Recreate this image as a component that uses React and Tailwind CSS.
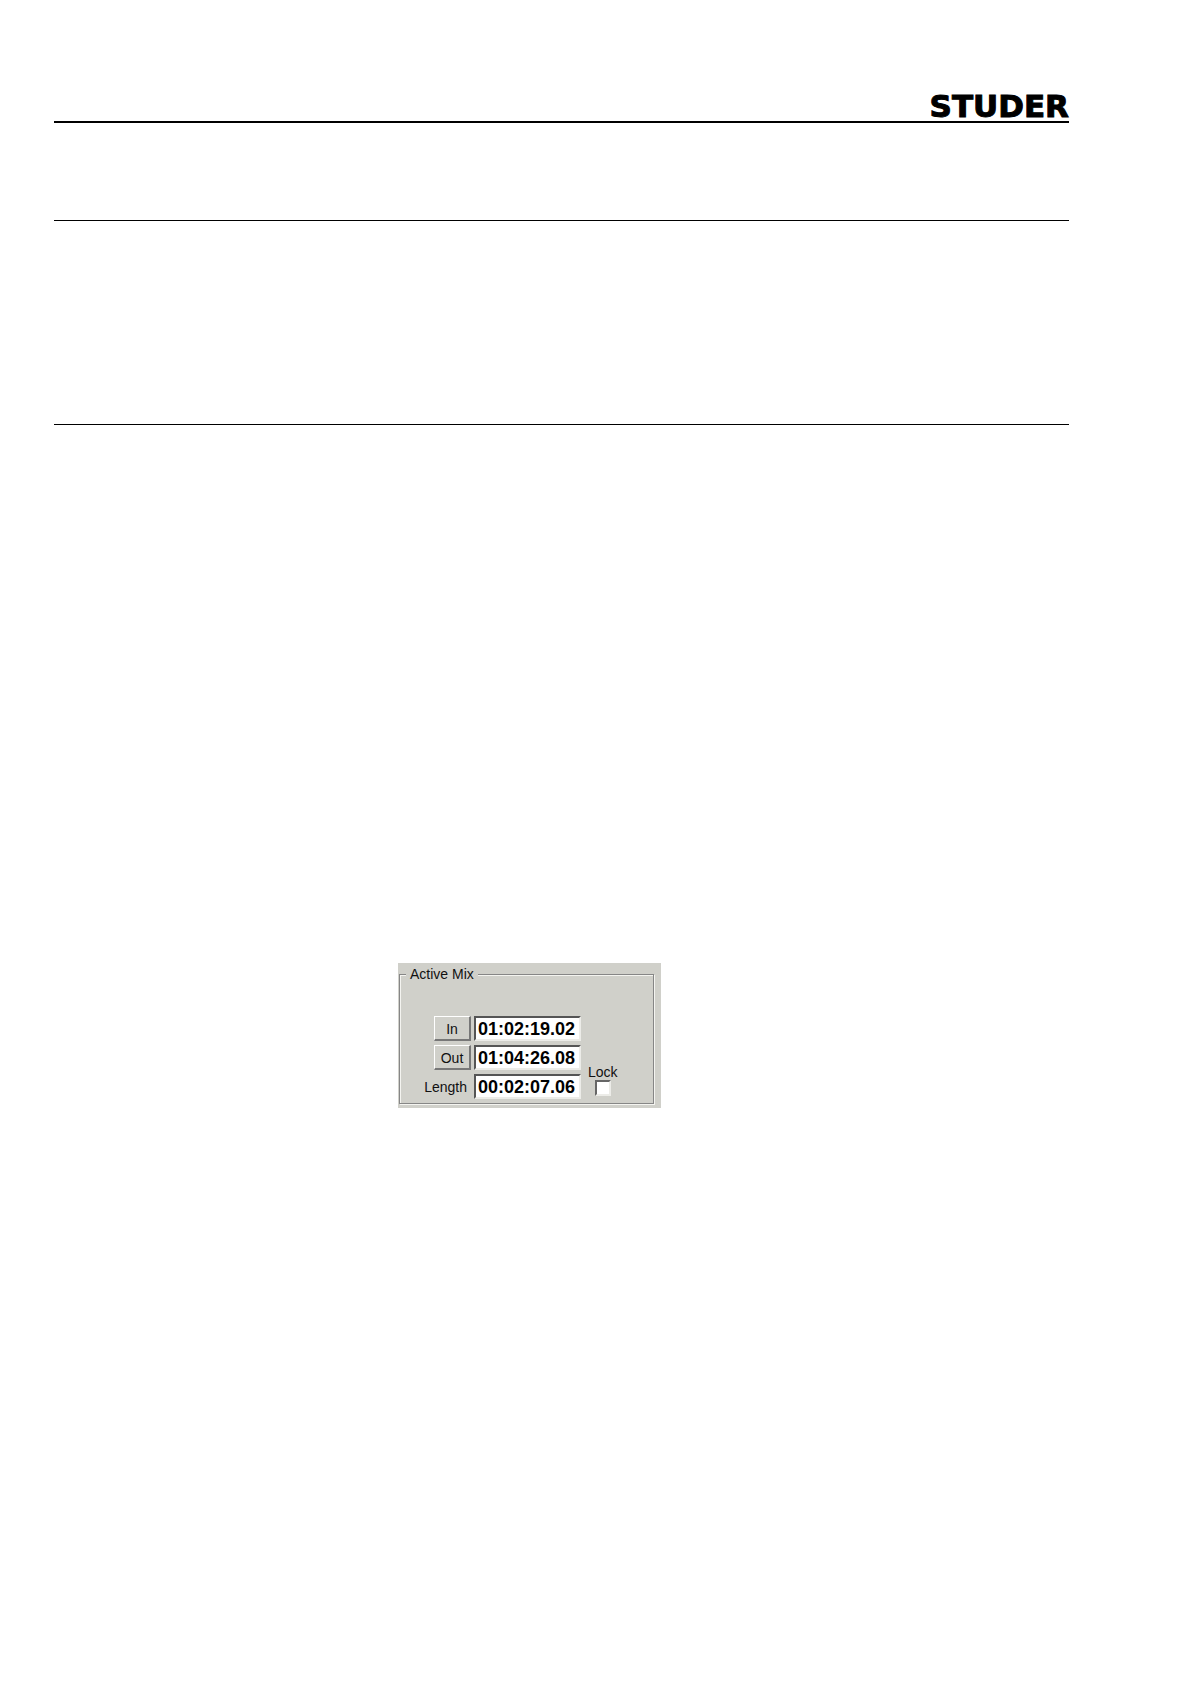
// App.jsx
// Manual page with the "Active Mix" time code panel

import React, { useState } from "react";

// One editable time code, e.g. 01:02:19.02
const TimeField = ({ id, label, value, onChange }) => (
    <input
        id={id}
        type="text"
        aria-label={label}
        value={value}
        onChange={(e) => onChange(e.target.value)}
        className="h-[25px] w-[107px] border-2 border-t-[#555555] border-l-[#555555] border-r-[#ecece8] border-b-[#ecece8] bg-white px-[2px] pt-px text-[18px] leading-5 font-bold text-black outline-none"
    />
);

const PanelButton = ({ children }) => (
    <button
        type="button"
        className="h-[25px] w-[37px] border-t border-l border-r-2 border-b-2 border-t-white border-l-white border-r-[#777777] border-b-[#777777] bg-[#d0d0ca] pt-px text-sm leading-4"
    >
        {children}
    </button>
);

const ActiveMixPanel = () => {
    const [markIn, setMarkIn] = useState("01:02:19.02");
    const [markOut, setMarkOut] = useState("01:04:26.08");
    const [length, setLength] = useState("00:02:07.06");
    const [locked, setLocked] = useState(false);

    return (
        <section className="w-[263px] bg-[#d0d0ca] pt-[3px] pr-[7px] pb-1 pl-px text-sm leading-4 text-[#111111]">
            <fieldset className="border border-[#868686] pt-[34px] pb-1 pl-6 shadow-[1px_1px_0_#f4f4f0,inset_1px_1px_0_#f4f4f0]">
                <legend className="-ml-[18px] bg-[#d0d0ca] px-1">
                    Active Mix
                </legend>

                <div className="flex items-end gap-[7px]">
                    {/* Time codes */}
                    <div className="grid grid-cols-[47px_107px] items-center justify-items-end gap-x-[3px] gap-y-1">
                        <PanelButton>In</PanelButton>
                        <TimeField
                            id="mix-in"
                            label="In"
                            value={markIn}
                            onChange={setMarkIn}
                        />
                        <PanelButton>Out</PanelButton>
                        <TimeField
                            id="mix-out"
                            label="Out"
                            value={markOut}
                            onChange={setMarkOut}
                        />
                        <label htmlFor="mix-length" className="pt-px pr-1">
                            Length
                        </label>
                        <TimeField
                            id="mix-length"
                            label="Length"
                            value={length}
                            onChange={setLength}
                        />
                    </div>

                    {/* Lock */}
                    <label className="flex flex-col items-center pb-[3px]">
                        Lock
                        <input
                            type="checkbox"
                            checked={locked}
                            onChange={(e) => setLocked(e.target.checked)}
                            className="size-4 appearance-none border-2 border-t-[#666666] border-l-[#666666] border-r-[#ecece8] border-b-[#ecece8] bg-white checked:bg-[#333333]"
                        />
                    </label>
                </div>
            </fieldset>
        </section>
    );
};

export default function App() {
    return (
        <div className="min-h-screen bg-white pt-[93px] pr-[121px] pb-16 pl-[54px] font-['Liberation_Sans',Arial,sans-serif] text-black">
            <header className="flex h-[30px] justify-end border-b-2 border-black">
                <span className="font-['DejaVu_Sans',sans-serif] text-[31px] leading-[26px] font-bold [-webkit-text-stroke:1px_black]">
                    STUDER
                </span>
            </header>

            <main>
                <hr className="mt-[97px] border-black" />
                <hr className="mt-[203px] border-black" />
                <div className="mt-[538px] ml-[344px]">
                    <ActiveMixPanel />
                </div>
            </main>
        </div>
    );
}
